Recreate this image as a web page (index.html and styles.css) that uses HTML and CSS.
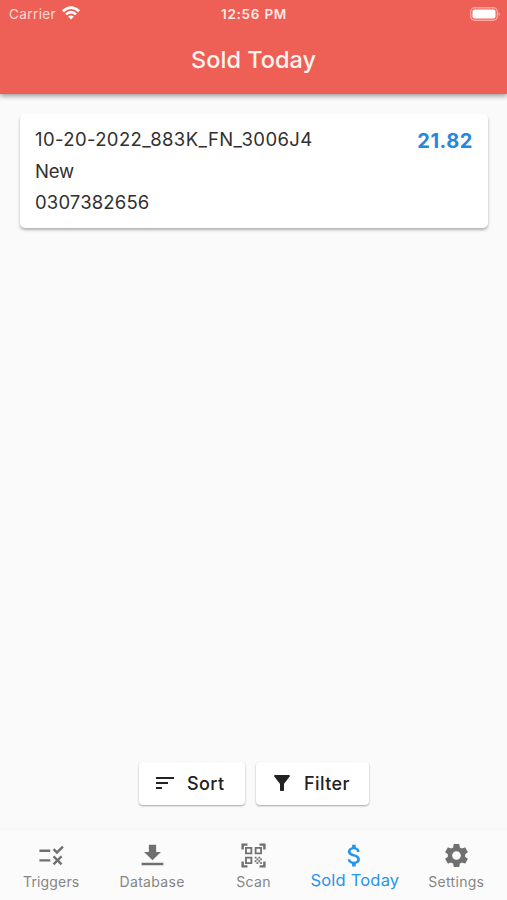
FILE: index.html
```html
<!DOCTYPE html>
<html lang="en">
<head>
<meta charset="utf-8">
<title>Sold Today</title>
<link rel="stylesheet" href="styles.css">
</head>
<body>
<div class="app">
  <header class="header">
    <div class="status">
      <div class="carrier"><span>Carrier</span>
        <svg class="wifi" viewBox="0 0 18 14"><path d="M0 4.3Q9-3.7 18 4.3L16.200 6.200Q9-.2 1.800 6.200ZM3.100 7.400Q9 2.300 14.900 7.400L13.100 9.300Q9 5.900 4.900 9.300ZM6.100 10.500Q9 8.300 11.900 10.500L9 13.600Z"/></svg>
      </div>
      <div class="clock">12:56 PM</div>
      <svg class="battery" viewBox="0 0 31 14"><rect class="battery-edge" x=".7" y=".7" width="26.600" height="12.600" rx="4"/><rect x="2.500" y="2.500" width="23" height="9" rx="2"/><path class="battery-tip" d="M28.500 4.700Q31 7 28.500 9.300Z"/></svg>
    </div>
    <h1 class="title">Sold Today</h1>
  </header>
  <main class="content">
    <article class="card">
      <div class="details"><div class="sku">10-20-2022_883K_FN_3006J4</div><div class="condition">New</div><div class="isbn">0307382656</div></div>
      <div class="price">21.82</div>
    </article>
    <div class="actions">
      <button class="button sort"><svg class="small-icon" viewBox="0 0 24 24"><path d="M3 18h6v-2H3v2zM3 6v2h18V6H3zm0 7h12v-2H3v2z"/></svg><span>Sort</span></button>
      <button class="button filter"><svg class="small-icon" viewBox="0 0 24 24"><path d="M4.250 5.610C6.270 8.200 10 13 10 13v6c0 .55.45 1 1 1h2c.55 0 1-.45 1-1v-6s3.720-4.800 5.740-7.390c.51-.66.04-1.610-.79-1.610H5.040c-.83 0-1.300.95-.79 1.610z"/></svg><span>Filter</span></button>
    </div>
  </main>
  <nav class="tabs">
    <a class="tab triggers"><svg class="icon" viewBox="0 0 24 24"><path d="M16.540 11L13 7.460l1.410-1.410 2.120 2.120 4.240-4.240 1.410 1.410L16.540 11zM11 7H2v2h9V7zm10 6.410L19.590 12 17 14.590 14.410 12 13 13.410 15.590 16 13 18.590 14.410 20 17 17.410 19.590 20 21 18.590 18.410 16 21 13.410zM11 15H2v2h9v-2z"/></svg><span>Triggers</span></a>
    <a class="tab database"><svg class="icon" viewBox="0 0 24 24"><path d="M19 9h-4V3H9v6H5l7 7 7-7zM3 18v2h18v-2H3z"/></svg><span>Database</span></a>
    <a class="tab scan"><svg class="icon" viewBox="0 0 24 24"><path d="M9.500 6.500v3h-3v-3h3M11 5H5v6h6V5zM9.500 14.500v3h-3v-3h3M11 13H5v6h6v-6zM17.500 6.500v3h-3v-3h3M19 5h-6v6h6V5zM13 13h1.500v1.500H13V13zM14.500 14.500H16V16h-1.500v-1.500zM16 13h1.500v1.500H16V13zM13 16h1.500v1.500H13V16zM14.500 17.500H16V19h-1.500v-1.500zM16 16h1.500v1.500H16V16zM17.500 14.500H19V16h-1.500v-1.500zM17.500 17.500H19V19h-1.500v-1.500zM22 7h-2V4h-3V2h5v5zM22 22v-5h-2v3h-3v2h5zM2 22h5v-2H4v-3H2v5zM2 2v5h2V4h3V2H2z"/></svg><span>Scan</span></a>
    <a class="tab active"><svg class="icon" viewBox="0 0 24 24"><path d="M11.800 10.900c-2.270-.59-3-1.200-3-2.150 0-1.090 1.010-1.850 2.700-1.850 1.780 0 2.440.85 2.500 2.100h2.210c-.07-1.720-1.120-3.300-3.210-3.810V3h-3v2.160c-1.940.42-3.500 1.680-3.500 3.610 0 2.310 1.910 3.460 4.700 4.130 2.500.6 3 1.480 3 2.410 0 .69-.49 1.790-2.700 1.790-2.060 0-2.870-.92-2.980-2.100h-2.200c.12 2.190 1.760 3.420 3.680 3.830V21h3v-2.150c1.950-.37 3.500-1.500 3.500-3.550 0-2.840-2.430-3.810-4.700-4.400z"/></svg><span>Sold Today</span></a>
    <a class="tab settings"><svg class="icon" viewBox="0 0 24 24"><path d="M19.140 12.940c.04-.3.06-.61.06-.94 0-.32-.02-.64-.07-.94l2.030-1.580c.18-.14.23-.41.12-.61l-1.920-3.320c-.12-.22-.37-.29-.59-.22l-2.390.96c-.5-.38-1.030-.7-1.620-.94l-.36-2.540c-.04-.24-.24-.41-.48-.41h-3.840c-.24 0-.43.17-.47.41l-.36 2.540c-.59.24-1.130.57-1.620.94l-2.390-.96c-.22-.08-.47 0-.59.22L2.740 8.870c-.12.21-.08.47.12.61l2.030 1.580c-.05.3-.09.63-.09.94s.02.64.07.94l-2.030 1.580c-.18.14-.23.41-.12.61l1.920 3.320c.12.22.37.29.59.22l2.390-.96c.5.38 1.030.7 1.620.94l.36 2.540c.05.24.24.41.48.41h3.840c.24 0 .44-.17.47-.41l.36-2.540c.59-.24 1.130-.56 1.620-.94l2.390.96c.22.08.47 0 .59-.22l1.920-3.320c.12-.22.07-.47-.12-.61l-2.010-1.580zM12 15.600c-1.980 0-3.600-1.620-3.600-3.600s1.620-3.600 3.600-3.600 3.600 1.620 3.600 3.600-1.620 3.600-3.600 3.600z"/></svg><span>Settings</span></a>
  </nav>
</div>
</body>
</html>
```
FILE: styles.css
```css
* { box-sizing: border-box; }
body { margin: 0; background: #fafafa; font-family: Inter, "Liberation Sans", sans-serif; color: #303030; }
svg { display: block; fill: currentColor; flex: none; }
.app { height: 900px; display: flex; flex-direction: column; overflow: hidden; }
.header { height: 94px; flex: none; background: #ee6056; color: #fff3f0; box-shadow: 0 2px 5px rgba(0,0,0,.4); }
.status { height: 28px; padding: 0 6px 0 9px; display: grid; grid-template-columns: 1fr auto 1fr; align-items: center; font-size: 13.500px; line-height: 28px; }
.carrier { display: flex; align-items: center; gap: 6px; letter-spacing: .4px; color: #ffd9d3; }
.wifi { width: 18px; height: 14px; color: #fff; margin-top: -2px; }
.clock { font-weight: 600; letter-spacing: .75px; margin-left: -2px; color: #ffe8e4; }
.battery { width: 31px; height: 14px; justify-self: end; margin-top: -1px; color: #fff; }
.battery-edge { fill: none; stroke: #f8a7a0; stroke-width: 1.400px; }
.battery-tip { fill: #f8a7a0; }
.title { margin: 17px 0 0; font-size: 23.500px; line-height: 30px; font-weight: 500; text-align: center; }
.content { flex: 1; display: flex; flex-direction: column; justify-content: space-between; padding: 20px 19px 25px 20px; }
.card { height: 114px; padding: 10px 15px 0 15px; display: flex; justify-content: space-between; background: #fff; border-radius: 5px; box-shadow: 0 2px 3px rgba(0,0,0,.3); }
.details { font-size: 18.500px; line-height: 31.600px; letter-spacing: .3px; }
.sku { letter-spacing: .38px; }
.condition { letter-spacing: -.15px; }
.isbn { letter-spacing: .15px; }
.price { font-size: 20px; font-weight: 700; line-height: 34px; letter-spacing: .55px; color: #2588d8; }
.actions { display: flex; justify-content: center; gap: 11px; }
.button { height: 43px; padding: 0 0 1px; display: flex; align-items: center; border: 0; border-radius: 4px; background: #fff; box-shadow: 0 1px 2px rgba(0,0,0,.35); color: #222; font: 500 18px Inter, "Liberation Sans", sans-serif; letter-spacing: .4px; }
.sort { width: 106px; padding-left: 14px; gap: 10px; }
.filter { width: 113px; padding-left: 14px; gap: 10px; }
.small-icon { width: 24px; height: 24px; }
.tabs { height: 70px; flex: none; display: grid; grid-template-columns: repeat(5, 1fr); background: #fbfbfb; box-shadow: 0 -1px 5px rgba(0,0,0,.035); color: #858585; }
.tab { display: flex; flex-direction: column; align-items: center; padding-top: 11px; font-size: 14px; line-height: 23px; letter-spacing: .3px; white-space: nowrap; }
.triggers { padding-left: 1px; letter-spacing: .15px; }
.icon { width: 29px; height: 29px; color: #707070; }
.active, .active .icon { color: #2595eb; }
.active { font-size: 16.500px; line-height: 21px; letter-spacing: .2px; }
```
